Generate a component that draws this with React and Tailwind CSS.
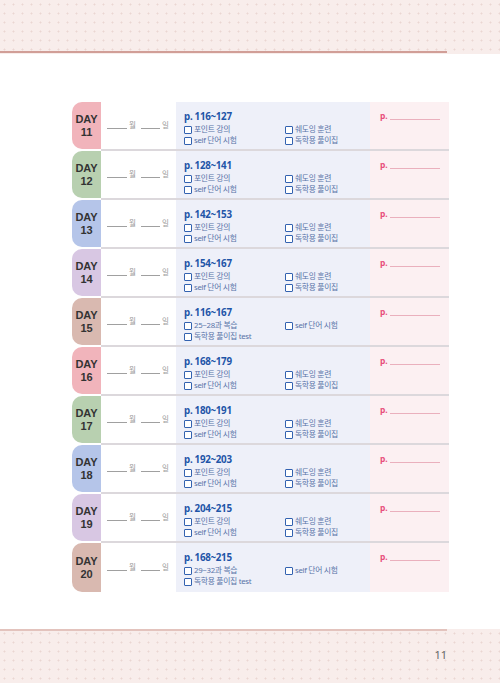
import React from "react";

const TAB_COLORS = ["bg-[#f1b4bb]", "bg-[#b8d0b0]", "bg-[#b5c5e9]", "bg-[#d8c7e3]", "bg-[#d9b9b0]"];

const STD = [["포인트 강의", "쉐도잉 훈련"], ["self 단어 시험", "독학용 풀이집"]];

const rows = [
  { day: 11, p: "116~127", items: STD },
  { day: 12, p: "128~141", items: STD },
  { day: 13, p: "142~153", items: STD },
  { day: 14, p: "154~167", items: STD },
  { day: 15, p: "116~167", items: [["25~28과 복습", "self 단어 시험"], ["독학용 풀이집 test", null]] },
  { day: 16, p: "168~179", items: STD },
  { day: 17, p: "180~191", items: STD },
  { day: 18, p: "192~203", items: STD },
  { day: 19, p: "204~215", items: STD },
  { day: 20, p: "168~215", items: [["29~32과 복습", "self 단어 시험"], ["독학용 풀이집 test", null]] },
];

const dots =
  "bg-[#f8edeb] bg-[radial-gradient(circle,#ead6d2_0.8px,transparent_1.2px)] bg-[length:9px_9px]";

function Check({ label }) {
  if (!label) return <div />;
  return (
    <div className="flex items-center gap-[2px] h-[11px]">
      <span className="w-[8px] h-[8px] border-[1.5px] border-[#3362b0] rounded-[1px] bg-white shrink-0" />
      <span className="text-[7.8px] leading-none text-[#5873a8] tracking-[-0.3px]">{label}</span>
    </div>
  );
}

function Row({ r, i, last }) {
  return (
    <div className="flex h-[49px]">
      <div
        className={`w-[29px] ${last ? "" : "mb-[2px]"} ${TAB_COLORS[i % 5]} rounded-l-[10px] flex flex-col items-center justify-center text-[#333] font-bold text-[11px] leading-[13px] font-['Liberation_Sans',sans-serif]`}
      >
        <span>DAY</span>
        <span>{r.day}</span>
      </div>
      <div className={`flex flex-1 ${last ? "" : "border-b-2 border-[#dcd8dc]"}`}>
        <div className="w-[75px] flex items-center pl-[6px] text-[7.5px] text-[#9a9a9a]">
          <span className="w-[20px] h-[1px] bg-[#a0a0a0] mt-[6px]" />
          <span className="ml-[2px]">월</span>
          <span className="w-[19px] h-[1px] bg-[#a0a0a0] mt-[6px] ml-[5px]" />
          <span className="ml-[2px]">일</span>
        </div>
        <div className="w-[194px] bg-[#eef0f9] pl-[8px] pt-[8px]">
          <div className="text-[9.8px] leading-[13px] font-bold text-[#1f55a8] tracking-[-0.3px]">p. {r.p}</div>
          <div className="grid grid-cols-[101px_1fr] mt-[1px]">
            <Check label={r.items[0][0]} />
            <Check label={r.items[0][1]} />
            <Check label={r.items[1][0]} />
            <Check label={r.items[1][1]} />
          </div>
        </div>
        <div className="w-[79px] bg-[#fcf0f2] pl-[10px] pt-[10px]">
          <div className="flex items-end">
            <span className="text-[8.5px] leading-none font-bold text-[#e8517d]">p.</span>
            <span className="w-[50px] h-[1px] bg-[#eab0bd] ml-[2px] mb-[1px]" />
          </div>
        </div>
      </div>
    </div>
  );
}

export default function App() {
  return (
    <div className="w-[500px] h-[683px] bg-white flex flex-col font-['Noto_Sans','Noto_Sans_CJK_KR',sans-serif] overflow-hidden">
      <div className={`h-[54px] ${dots} flex flex-col justify-end`}>
        <div className="w-[447px] h-[2px] bg-[#d19e97] mb-[1px]" />
      </div>
      <div className="pl-[72px] pt-[48px]">
        <div className="w-[377px] flex flex-col">
          {rows.map((r, i) => (
            <Row key={r.day} r={r} i={i} last={i === rows.length - 1} />
          ))}
        </div>
      </div>
      <div className="flex-1" />
      <div className={`h-[54px] ${dots} flex flex-col`}>
        <div className="w-[447px] h-[2px] bg-[#e3c3bd]" />
        <div className="w-[447px] flex justify-end pt-[18px] text-[11px] text-[#666] leading-none font-normal">11</div>
      </div>
    </div>
  );
}
